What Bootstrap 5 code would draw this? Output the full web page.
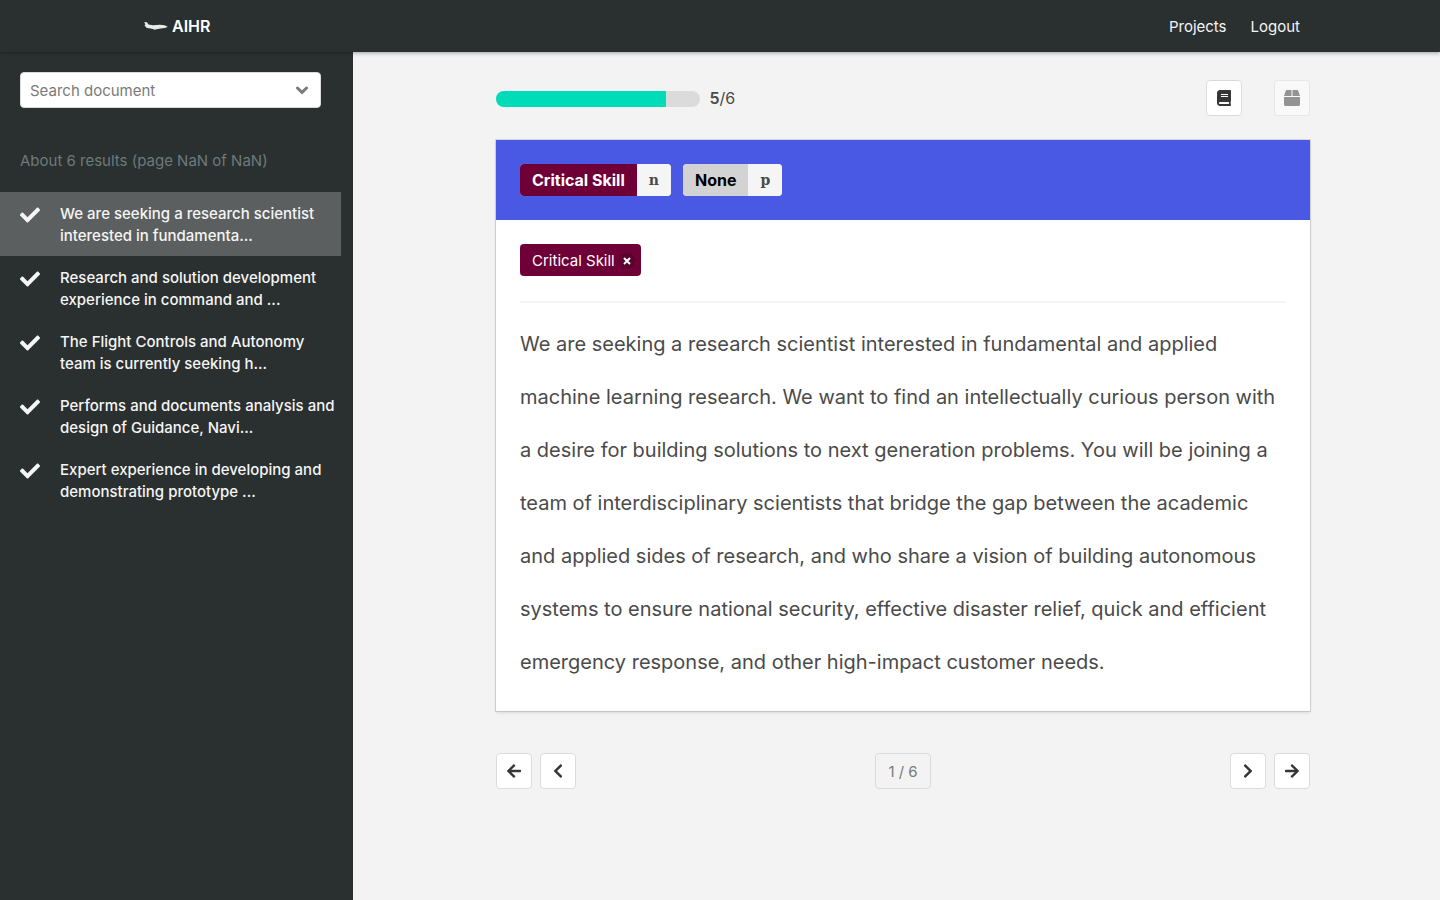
<!DOCTYPE html>
<html lang="en">
<head>
<meta charset="utf-8">
<meta name="viewport" content="width=device-width, initial-scale=1">
<title>AIHR</title>
<link href="https://cdn.jsdelivr.net/npm/bootstrap@5.3.0/dist/css/bootstrap.min.css" rel="stylesheet">
<style>
:root { --ink: #2a2f2f; --wine: #6f0037; --indigo: #4959e3; }
body { font-family: Inter, "Liberation Sans", sans-serif; font-size: 15px; line-height: 24px; color: #4a4a4a; background: #f3f3f3; }
svg { fill: currentColor; display: block; }
.topbar { height: 52px; padding: 0 128px 0 144px; font-size: 16px; background: var(--ink); box-shadow: 0 1px 4px rgba(10,10,10,.35); position: relative; z-index: 2; }
.brand { color: #fff; font-weight: 600; gap: 4px; }
.topbar .nav { padding-top: 1px; }
.topbar .nav-link { color: #f5f5f5; padding: 0 12px; font-size: 15px; }
.shell { min-height: calc(100vh - 52px); }
.sidebar { width: 353px; background: var(--ink); padding-top: 20px; }
.finder { margin: 0 32px 0 20px; height: 36px; background: #fff; border: 1px solid #dbdbdb; border-radius: 4px; }
.finder input { border: 0; outline: 0; padding: 1px 0 0 9px; background: transparent; color: #363636; }
.finder input::placeholder { color: #7a7a7a; opacity: 1; }
.finder button { border: 0; background: transparent; color: #7a7a7a; padding: 0 12px; }
.results { color: #6c7a7c; margin: 41px 20px 19px; }
.doc { color: #f5f5f5; gap: 20px; padding: 11px 4px 9px 20px; margin-right: 12px; font-weight: 500; line-height: 22px; text-decoration: none; }
.doc.active { background: #5b5f5f; }
.doc svg { margin-top: 2px; }
.workspace { padding: 28px 130px 28px 143px; min-width: 0; }
.meter { width: 25%; height: 16px; margin-top: 2px; border-radius: 8px; background: #dbdbdb; }
.meter .progress-bar { background: #00dcb8; }
.tally { margin-left: 10px; font-size: 16px; }
.tool { width: 36px; height: 36px; padding: 0; border: 1px solid #dbdbdb; border-radius: 4px; background: #fff; color: #363636; display: flex; align-items: center; justify-content: center; }
.tool:disabled { opacity: .5; color: #363636; }
.actions { gap: 32px; }
.sheet { margin-top: 24px; background: #fff; box-shadow: 0 2px 3px rgba(10,10,10,.1), 0 0 0 1px rgba(10,10,10,.12); }
.sheet-head { background: var(--indigo); padding: 24px; gap: 12px; }
.sheet-body { padding: 24px 24px 22px; }
.choice { border: 0; padding: 0; height: 32px; border-radius: 4px; overflow: hidden; font-size: 16px; font-weight: 700; line-height: 32px; }
.choice span { padding: 0 12px; }
.choice kbd { font: bold 14px/32px "DejaVu Serif", serif; color: #4a4a4a; background: #f5f5f5; padding: 0 12px; border-radius: 0; }
.wine { background: var(--wine); color: #fff; }
.grey { background: #d3d3d3; color: #000; }
.chip { height: 32px; padding: 1px 6px 0 12px; border-radius: 4px; }
.chip button { width: 16px; height: 16px; margin-left: 4px; border: 0; padding: 0; border-radius: 50%; background: rgba(10,10,10,.2); color: #fff; }
.rule { height: 2px; border: 0; margin: 25px 0 15px; background: #f5f5f5; opacity: 1; }
.passage { font-size: 20px; line-height: 53px; margin: 0; }
.pager { margin-top: 42px; }
.count { height: 36px; padding: 1px 12px 0; border: 1px solid #dbdbdb; border-radius: 4px; background: transparent; color: #7a7a7a; }
</style>
</head>
<body>
<svg class="d-none">
  <symbol id="check" viewBox="0 0 512 512"><path d="M173.898 439.404l-166.4-166.4c-9.997-9.997-9.997-26.206 0-36.204l36.203-36.204c9.997-9.998 26.207-9.998 36.204 0L192 312.69 432.095 72.596c9.997-9.997 26.207-9.997 36.204 0l36.203 36.204c9.997 9.997 9.997 26.206 0 36.204l-294.4 294.401c-9.998 9.997-26.207 9.997-36.204-.001z"/></symbol>
  <symbol id="chevron" viewBox="0 0 320 512"><path d="M34.52 239.03L228.87 44.69c9.37-9.37 24.57-9.37 33.94 0l22.67 22.67c9.36 9.36 9.37 24.52.04 33.9L131.49 256l154.02 154.75c9.34 9.38 9.32 24.54-.04 33.9l-22.67 22.67c-9.37 9.37-24.57 9.37-33.94 0L34.52 272.97c-9.37-9.37-9.37-24.57 0-33.94z"/></symbol>
  <symbol id="chevron-right" viewBox="0 0 320 512"><path transform="matrix(-1 0 0 1 320 0)" d="M34.52 239.03L228.87 44.69c9.37-9.37 24.57-9.37 33.94 0l22.67 22.67c9.36 9.36 9.37 24.52.04 33.9L131.49 256l154.02 154.75c9.34 9.38 9.32 24.54-.04 33.9l-22.67 22.67c-9.37 9.37-24.57 9.37-33.94 0L34.52 272.97c-9.37-9.37-9.37-24.57 0-33.94z"/></symbol>
  <symbol id="arrow" viewBox="0 0 448 512"><path d="M257.5 445.1l-22.2 22.2c-9.4 9.4-24.6 9.4-33.9 0L7 273c-9.4-9.4-9.4-24.6 0-33.9L201.4 44.7c9.4-9.4 24.6-9.4 33.9 0l22.2 22.2c9.5 9.5 9.3 25-.4 34.3L136.6 216H424c13.3 0 24 10.7 24 24v32c0 13.3-10.7 24-24 24H136.6l120.5 114.8c9.8 9.3 10 24.8.4 34.3z"/></symbol>
  <symbol id="arrow-right" viewBox="0 0 448 512"><path transform="matrix(-1 0 0 1 448 0)" d="M257.5 445.1l-22.2 22.2c-9.4 9.4-24.6 9.4-33.9 0L7 273c-9.4-9.4-9.4-24.6 0-33.9L201.4 44.7c9.4-9.4 24.6-9.4 33.9 0l22.2 22.2c9.5 9.5 9.3 25-.4 34.3L136.6 216H424c13.3 0 24 10.7 24 24v32c0 13.3-10.7 24-24 24H136.6l120.5 114.8c9.8 9.3 10 24.8.4 34.3z"/></symbol>
</svg>

<header class="topbar d-flex align-items-center justify-content-between">
  <a href="#" class="brand d-flex align-items-center text-decoration-none">
    <svg width="24" height="10" viewBox="0 0 24 10" aria-hidden="true"><path d="M.3 1 3 1.200 4.500 3.600 9 4.200l7-.4c3 0 6 .8 7.700 2-1.700 1-4.200 1.600-7 1.700l-3 .4-3.200.8-1.500-.8-5.500-.9C2.200 6.800 1.200 6 1.500 5.200L.4 4.500l.9-.7Z" opacity=".9"/></svg>
    <span>AIHR</span>
  </a>
  <nav class="nav">
    <a class="nav-link" href="#">Projects</a>
    <a class="nav-link" href="#">Logout</a>
  </nav>
</header>

<div class="shell d-flex">
  <aside class="sidebar flex-shrink-0">
    <form class="finder d-flex align-items-center">
      <input type="text" class="flex-grow-1 w-100" placeholder="Search document" aria-label="Search document">
      <button type="button" aria-label="Filter documents"><svg width="12" height="16" viewBox="0 0 12 16"><path d="M1.500 6 6 10.500 10.500 6" fill="none" stroke="currentColor" stroke-width="3" stroke-linecap="round"/></svg></button>
    </form>
    <p class="results">About 6 results (page NaN of NaN)</p>
    <nav>
      <a href="#" class="doc active d-flex"><svg class="flex-shrink-0" width="20" height="20"><use href="#check"/></svg><span>We are seeking a research scientist interested in fundamenta...</span></a>
      <a href="#" class="doc d-flex"><svg class="flex-shrink-0" width="20" height="20"><use href="#check"/></svg><span>Research and solution development experience in command and ...</span></a>
      <a href="#" class="doc d-flex"><svg class="flex-shrink-0" width="20" height="20"><use href="#check"/></svg><span>The Flight Controls and Autonomy team is currently seeking h...</span></a>
      <a href="#" class="doc d-flex"><svg class="flex-shrink-0" width="20" height="20"><use href="#check"/></svg><span>Performs and documents analysis and design of Guidance, Navi...</span></a>
      <a href="#" class="doc d-flex"><svg class="flex-shrink-0" width="20" height="20"><use href="#check"/></svg><span>Expert experience in developing and demonstrating prototype ...</span></a>
    </nav>
  </aside>

  <main class="workspace flex-grow-1">
    <div class="d-flex align-items-center">
      <div class="progress meter" role="progressbar" aria-label="Documents annotated" aria-valuenow="5" aria-valuemin="0" aria-valuemax="6"><div class="progress-bar" style="width:83.333%"></div></div>
      <span class="tally"><strong class="fw-semibold">5</strong>/6</span>
      <div class="actions d-flex ms-auto">
        <button class="tool" type="button" aria-label="Guideline"><svg width="14" height="16" viewBox="0 0 448 512"><path d="M448 360V24c0-13.300-10.700-24-24-24H96C43 0 0 43 0 96v320c0 53 43 96 96 96h328c13.300 0 24-10.700 24-24v-16c0-7.500-3.500-14.300-8.900-18.700-4.200-15.400-4.200-59.300 0-74.700 5.400-4.300 8.900-11.100 8.900-18.600zM128 134c0-3.300 2.700-6 6-6h212c3.300 0 6 2.700 6 6v20c0 3.300-2.700 6-6 6H134c-3.300 0-6-2.700-6-6v-20zm0 64c0-3.300 2.700-6 6-6h212c3.300 0 6 2.700 6 6v20c0 3.300-2.700 6-6 6H134c-3.300 0-6-2.700-6-6v-20zm253.400 250H96c-17.700 0-32-14.300-32-32 0-17.600 14.400-32 32-32h285.400c-1.900 17.100-1.900 46.900 0 64z"/></svg></button>
        <button class="tool" type="button" aria-label="Metadata" disabled><svg width="16" height="16" viewBox="0 0 512 512"><path d="M509.500 184.600L458.900 32.800C452.400 13.200 434.100 0 413.400 0H272v192h238.700c-.4-2.500-.4-5-1.200-7.400zM240 0H98.600c-20.700 0-39 13.200-45.500 32.800L2.500 184.600c-.8 2.400-.8 4.900-1.200 7.400H240V0zM0 224v240c0 26.500 21.500 48 48 48h416c26.500 0 48-21.500 48-48V224H0z"/></svg></button>
      </div>
    </div>

    <section class="sheet">
      <div class="sheet-head d-flex flex-wrap">
        <button class="choice d-flex" type="button"><span class="wine">Critical Skill</span><kbd>n</kbd></button>
        <button class="choice d-flex" type="button"><span class="grey">None</span><kbd>p</kbd></button>
      </div>
      <div class="sheet-body">
        <div class="d-flex"><span class="chip wine d-flex align-items-center">Critical Skill<button type="button" class="d-flex align-items-center justify-content-center" aria-label="Remove Critical Skill"><svg width="8" height="8" viewBox="0 0 8 8"><path d="M1 1l6 6M7 1L1 7" stroke="currentColor" stroke-width="2"/></svg></button></span></div>
        <hr class="rule">
        <p class="passage">We are seeking a research scientist interested in fundamental and applied machine learning research. We want to find an intellectually curious person with a desire for building solutions to next generation problems. You will be joining a team of interdisciplinary scientists that bridge the gap between the academic and applied sides of research, and who share a vision of building autonomous systems to ensure national security, effective disaster relief, quick and efficient emergency response, and other high-impact customer needs.</p>
      </div>
    </section>

    <div class="pager row g-0 align-items-center">
      <div class="col d-flex gap-2">
        <button class="tool" type="button" aria-label="First page"><svg width="14" height="16"><use href="#arrow"/></svg></button>
        <button class="tool" type="button" aria-label="Previous page"><svg width="10" height="16"><use href="#chevron"/></svg></button>
      </div>
      <div class="col-auto"><button class="count" type="button">1 / 6</button></div>
      <div class="col d-flex gap-2 justify-content-end">
        <button class="tool" type="button" aria-label="Next page"><svg width="10" height="16"><use href="#chevron-right"/></svg></button>
        <button class="tool" type="button" aria-label="Last page"><svg width="14" height="16"><use href="#arrow-right"/></svg></button>
      </div>
    </div>
  </main>
</div>
<script src="https://cdn.jsdelivr.net/npm/bootstrap@5.3.0/dist/js/bootstrap.bundle.min.js"></script>
</body>
</html>
